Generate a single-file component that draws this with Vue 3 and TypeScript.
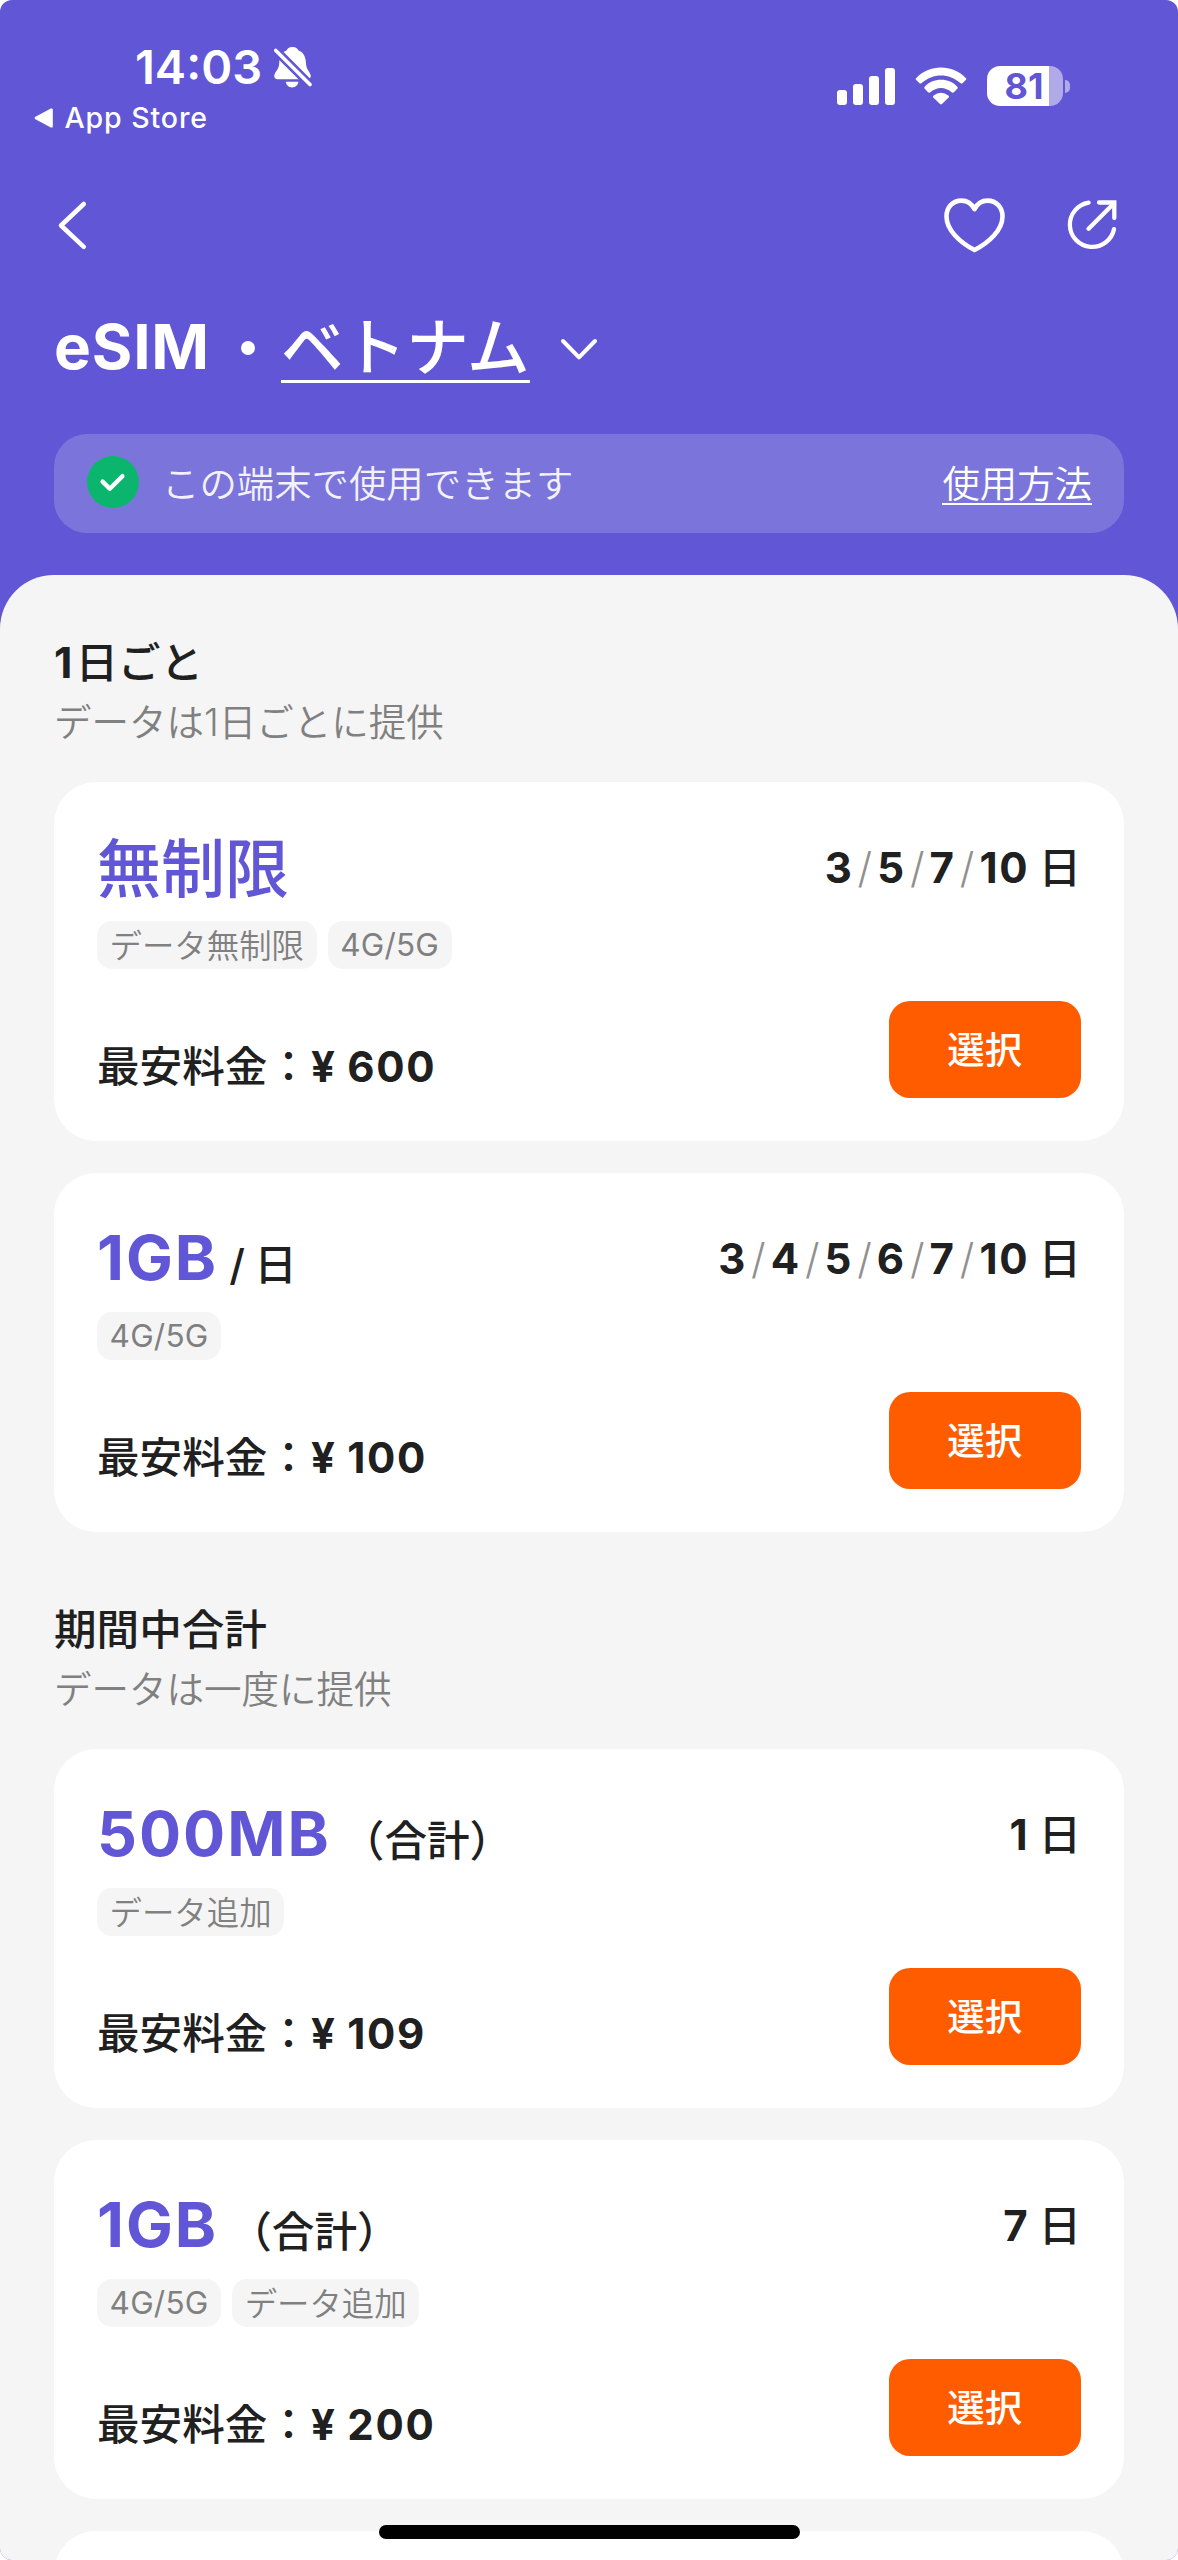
<script setup lang="ts">
interface Plan {
  amount: string
  unit?: string
  tags: string[]
  days: string[]
  price: string
}

interface Section {
  count?: string
  title: string
  note: string
  plans: Plan[]
}

const sections: Section[] = [
  {
    count: '1',
    title: '日ごと',
    note: 'データは1日ごとに提供',
    plans: [
      { amount: '無制限', tags: ['データ無制限', '4G/5G'], days: ['3', '5', '7', '10'], price: '600' },
      { amount: '1GB', unit: '/ 日', tags: ['4G/5G'], days: ['3', '4', '5', '6', '7', '10'], price: '100' },
    ],
  },
  {
    title: '期間中合計',
    note: 'データは一度に提供',
    plans: [
      { amount: '500MB', unit: '（合計）', tags: ['データ追加'], days: ['1'], price: '109' },
      { amount: '1GB', unit: '（合計）', tags: ['4G/5G', 'データ追加'], days: ['7'], price: '200' },
    ],
  },
]

const signalBars = [15, 21, 29, 37]
const isLatin = (text: string): boolean => /^[\x20-\x7e]+$/.test(text)
</script>

<template>
  <div class="screen">
    <header class="header">
      <div class="status">
        <div class="status-left">
          <div class="clock">
            <span class="time">14:03</span>
            <svg class="bell" viewBox="0 0 38 41">
              <path d="M18.5 0C22 0 23.6 1.6 24.2 3.2C30 5.2 31.8 10.5 32 16.5C32.2 22.5 35.8 24.5 36.8 28.6Q37 32.2 33 32.2H3.8Q0 32.2 .2 28.6C1 24.5 5 22.5 5.2 16.5C5.4 10.5 7 5.2 12.8 3.2C13.4 1.6 15 0 18.5 0Z" fill="#fff" />
              <path d="M11.8 34.8H24.4C24 38.2 21.6 40.4 18.1 40.4C14.6 40.4 12.2 38.2 11.8 34.8Z" fill="#fff" />
              <path d="M1.8 3.4L36 37.6" stroke="#6156d5" stroke-width="8.6" stroke-linecap="round" />
              <path d="M1.8 3.4L36 37.6" stroke="#fff" stroke-width="3.6" stroke-linecap="round" />
            </svg>
          </div>
          <div class="return">
            <svg class="triangle" viewBox="0 0 19 20">
              <path d="M1 9.1L16.8 .5Q18.6 0 18.8 1.6V18.4Q18.6 20 16.8 19.5L1 10.9Q0 10 1 9.1Z" fill="#fff" />
            </svg>
            <span>App Store</span>
          </div>
        </div>
        <div class="status-right">
          <div class="signal">
            <i v-for="h in signalBars" :key="h" :style="{ height: h + 'px' }"></i>
          </div>
          <svg class="wifi" viewBox="0 0 52 38">
            <g fill="#fff">
              <path d="M1 11.2C14 -3 38 -3 51 11.2Q51.6 12 51 12.8L47.5 16.2Q46.5 17 45.6 16.2C34 5.8 18 5.8 6.4 16.2Q5.5 17 4.5 16.2L1 12.8Q.4 12 1 11.2Z" />
              <path d="M9.5 20C17.5 10.3 34.5 10.3 42.5 20Q43 20.8 42.5 21.6L38.9 25.2Q37.9 26 37 25.4C30 19.4 22 19.4 15 25.4Q14.1 26 13.1 25.2L9.5 21.6Q9 20.8 9.5 20Z" />
              <path d="M18.3 28.8Q26 22.6 33.7 28.8Q34.3 29.6 33.7 30.4L27 37.1Q26 38 25 37.1L18.3 30.4Q17.7 29.6 18.3 28.8Z" />
            </g>
          </svg>
          <div class="battery-wrap">
            <div class="battery"><span>81</span></div>
            <i class="nub"></i>
          </div>
        </div>
      </div>

      <nav class="nav">
        <svg class="back" viewBox="0 0 30 50">
          <path d="M26.8 4L4 25.5L26.8 46.8" fill="none" stroke="#fff" stroke-width="4.5" stroke-linecap="round" stroke-linejoin="round" />
        </svg>
        <div class="actions">
          <svg class="heart" viewBox="0 0 61 55">
            <path d="M30.5 11.2C27.5 5.2 22.5 2.6 17.5 2.6C8.5 2.6 2.5 9.5 2.5 18.5C2.5 32 16 44.6 30.5 52C45 44.6 58.5 32 58.5 18.5C58.5 9.5 52.5 2.6 43.5 2.6C38.5 2.6 33.5 5.2 30.5 11.2Z" fill="none" stroke="#fff" stroke-width="4.6" stroke-linejoin="round" />
          </svg>
          <svg class="share" viewBox="0 0 50 50">
            <g fill="none" stroke="#fff" stroke-width="4.3" stroke-linecap="round">
              <path d="M21.6 2.6A22.3 22.3 0 1 0 47 29.2" />
              <path d="M21.6 28.8L47 3.2" />
              <path d="M32 2.5H47.3V18" />
            </g>
          </svg>
        </div>
      </nav>

      <h1 class="title">
        <span class="product">eSIM</span>
        <span class="dot"></span>
        <span class="country">ベトナム</span>
        <svg class="chevron" viewBox="0 0 38 24">
          <path d="M3 3L19 19.4L35 3" fill="none" stroke="#fff" stroke-width="4" stroke-linecap="round" stroke-linejoin="round" />
        </svg>
      </h1>

      <div class="banner">
        <svg class="check" viewBox="0 0 52 52">
          <circle cx="26" cy="26" r="26" fill="#0bb56e" />
          <path d="M15.6 25.6L22.8 32.8L35.4 20.2" fill="none" stroke="#fff" stroke-width="4.4" stroke-linecap="round" stroke-linejoin="round" />
        </svg>
        <span class="banner-text">この端末で使用できます</span>
        <a class="how">使用方法</a>
      </div>
    </header>

    <main class="panel">
      <section v-for="section in sections" :key="section.title" class="section">
        <h2><b v-if="section.count">{{ section.count }}</b>{{ section.title }}</h2>
        <p class="note">{{ section.note }}</p>
        <div class="cards">
          <article v-for="plan in section.plans" :key="plan.amount + plan.price" class="card">
            <div class="card-head">
              <div class="amount-row" :class="{ kanji: !isLatin(plan.amount) }">
                <span class="amount" :class="{ latin: isLatin(plan.amount) }">{{ plan.amount }}</span>
                <span v-if="plan.unit" class="unit" :class="{ daily: plan.unit.startsWith('/') }">{{ plan.unit }}</span>
              </div>
              <div class="days">
                <template v-for="(day, i) in plan.days" :key="day">
                  <span v-if="i > 0" class="sep">/</span><span class="day">{{ day }}</span>
                </template>
                <span class="day-unit">日</span>
              </div>
            </div>
            <div class="tags">
              <span v-for="tag in plan.tags" :key="tag" class="tag" :class="{ latin: isLatin(tag) }">{{ tag }}</span>
            </div>
            <div class="card-foot">
              <div class="price"><span class="price-label">最安料金：</span><span class="price-value">¥ {{ plan.price }}</span></div>
              <button type="button" class="select">選択</button>
            </div>
          </article>
        </div>
      </section>
      <div class="card next"></div>
    </main>
    <div class="home-indicator"></div>
  </div>
</template>

<style>
body {
  background: #fff;
}
</style>

<style scoped>
.screen {
  position: relative;
  display: flex;
  flex-direction: column;
  box-sizing: border-box;
  width: 1178px;
  height: 2560px;
  overflow: hidden;
  border-radius: 12px;
  background: #6156d5;
  color: #202020;
  font-family: Inter, "Noto Sans CJK JP", sans-serif;
}

.header {
  flex: none;
  height: 575.3px;
  color: #fff;
}

.status {
  display: flex;
  justify-content: space-between;
  height: 195px;
}

.status-left {
  padding: 40px 0 0 34px;
}

.clock {
  display: flex;
  align-items: center;
  gap: 12px;
  height: 54px;
  padding-left: 101px;
}

.time {
  font-size: 47px;
  font-weight: 600;
  line-height: 54px;
}

.bell {
  width: 38px;
  height: 41px;
}

.return {
  display: flex;
  align-items: center;
  gap: 11.5px;
  height: 34px;
  margin-top: 6.5px;
  font-size: 28.5px;
  font-weight: 500;
  line-height: 34px;
  letter-spacing: 0.9px;
}

.triangle {
  width: 19px;
  height: 20px;
}

.status-right {
  display: flex;
  align-items: center;
  height: 40px;
  padding: 66px 108px 0 0;
}

.signal {
  display: flex;
  align-items: flex-end;
  gap: 6px;
  height: 37px;
}

.signal i {
  width: 10px;
  border-radius: 3px;
  background: #fff;
}

.wifi {
  width: 52px;
  height: 38px;
  margin: 0 20px;
}

.battery-wrap {
  display: flex;
  align-items: center;
  gap: 2.5px;
}

.battery {
  box-sizing: border-box;
  width: 76px;
  height: 40px;
  padding-right: 1px;
  border-radius: 13px;
  background: linear-gradient(to right, #fff 62px, #b0aae9 62px);
  color: #6156d5;
  font-size: 36px;
  font-weight: 700;
  line-height: 40px;
  text-align: center;
}

.nub {
  width: 5px;
  height: 13px;
  border-radius: 0 5px 5px 0;
  background: #b0aae9;
}

.nav {
  display: flex;
  align-items: center;
  justify-content: space-between;
  height: 60px;
  padding: 0 61px 0 57px;
}

.back {
  width: 30px;
  height: 50px;
}

.actions {
  display: flex;
  align-items: center;
  gap: 62px;
}

.heart {
  width: 61px;
  height: 55px;
}

.share {
  width: 50px;
  height: 50px;
}

.title {
  display: flex;
  align-items: center;
  height: 80px;
  margin: 52px 0 0;
  padding-left: 54px;
  font-size: 62px;
  font-weight: 600;
  line-height: 80px;
}

.product {
  width: 158px;
  font-weight: 700;
  letter-spacing: 0.8px;
}

.dot {
  width: 14px;
  height: 14px;
  margin: 2px 26px 0 29px;
  border-radius: 50%;
  background: #fff;
}

.country {
  height: 69px;
  border-bottom: 3.5px solid #fff;
  font-size: 62.6px;
  font-weight: 500;
  line-height: 73px;
}

.chevron {
  width: 38px;
  height: 24px;
  margin: 5px 0 0 30px;
}

.banner {
  display: flex;
  align-items: center;
  box-sizing: border-box;
  height: 99px;
  margin: 46.7px 54px 0;
  padding: 0 32px 0 33px;
  border-radius: 33px;
  background: #7b75db;
  font-size: 37.4px;
  font-weight: 350;
  line-height: 56px;
}

.check {
  width: 52px;
  height: 52px;
  margin-top: -3px;
}

.banner-text {
  margin: 4px 0 0 23px;
  color: #f3f2fc;
}

.how {
  height: 42px;
  margin-left: auto;
  border-bottom: 2px solid #fff;
  line-height: 48px;
}

.panel {
  flex: 1;
  min-height: 0;
  padding: 57.7px 54px 0;
  border-radius: 54px 54px 0 0;
  background: #f5f5f5;
}

.section + .section {
  margin-top: 68px;
}

h2 {
  margin: 0;
  font-size: 42.6px;
  font-weight: 500;
  line-height: 60px;
}

h2 b {
  margin-right: 3px;
  font-weight: 700;
}

.note {
  margin: 6.5px 0 34.2px;
  color: #808080;
  font-size: 37.5px;
  font-weight: 350;
  line-height: 48px;
}

.cards {
  display: flex;
  flex-direction: column;
  gap: 31.7px;
}

.card {
  box-sizing: border-box;
  height: 359.3px;
  padding: 42.7px 43px;
  border-radius: 42px;
  background: #fff;
}

.next {
  margin-top: 31.7px;
}

.card-head {
  display: flex;
  justify-content: space-between;
  height: 84px;
}

.amount-row {
  display: flex;
  align-items: baseline;
  gap: 11px;
  line-height: 84px;
}

.amount-row.kanji {
  line-height: 89px;
}

.amount {
  color: #6156d5;
  font-size: 64px;
  font-weight: 500;
}

.amount.latin {
  font-size: 62.5px;
  font-weight: 700;
  letter-spacing: 2px;
}

.unit {
  font-size: 42.6px;
  font-weight: 500;
}

.unit.daily {
  word-spacing: -2px;
}

.days {
  display: flex;
  font-size: 42px;
  font-weight: 700;
  line-height: 88px;
}

.day {
  letter-spacing: 1.8px;
}

.sep {
  margin: 0 5px 0 4px;
  color: #909090;
  font-weight: 300;
}

.day-unit {
  margin-left: 9px;
  font-size: 42.6px;
  font-weight: 500;
}

.tags {
  display: flex;
  gap: 11px;
  height: 48px;
  margin-top: 13px;
}

.tag {
  box-sizing: border-box;
  height: 48px;
  padding: 0 12.6px;
  border-radius: 15px;
  background: #f5f5f5;
  color: #808080;
  font-size: 32.4px;
  font-weight: 350;
  line-height: 51px;
}

.tag.latin {
  font-size: 31.5px;
  font-weight: 400;
  line-height: 48px;
  letter-spacing: 0.2px;
}

.card-foot {
  display: flex;
  align-items: flex-end;
  justify-content: space-between;
  height: 97px;
  margin-top: 32px;
}

.price {
  font-size: 42.6px;
  font-weight: 500;
  line-height: 63px;
}

.price-value {
  margin-left: 1px;
  font-size: 42px;
  font-weight: 700;
  letter-spacing: 1.7px;
  word-spacing: -1px;
}

.select {
  width: 192.5px;
  height: 97px;
  padding: 3px 0 0;
  border: 0;
  border-radius: 21px;
  background: #ff5c00;
  color: #fff;
  font-family: inherit;
  font-size: 37.4px;
  font-weight: 500;
  line-height: 94px;
}

.home-indicator {
  position: absolute;
  bottom: 21.5px;
  left: 379px;
  width: 421px;
  height: 13.5px;
  border-radius: 7px;
  background: #000;
}
</style>
